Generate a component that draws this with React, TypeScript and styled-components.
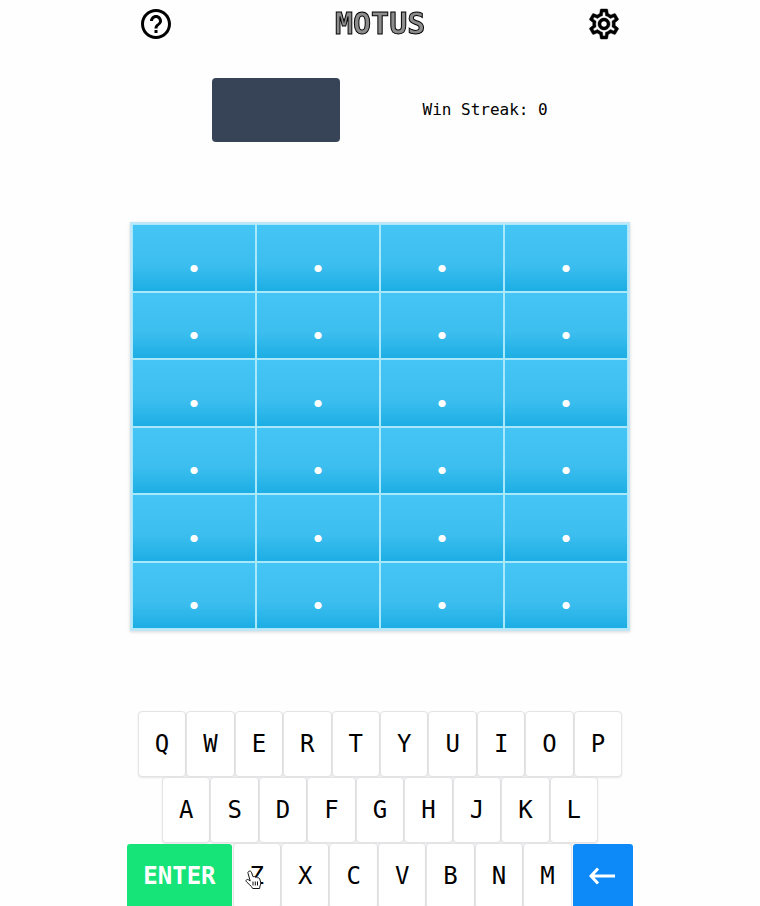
import React from "react";
import styled, { createGlobalStyle, css } from "styled-components";
import { MdHelpOutline, MdOutlineSettings } from "react-icons/md";

const GlobalStyle = createGlobalStyle`
  *, *::before, *::after { box-sizing: border-box; }
  body {
    margin: 0;
    background: #fefefe;
    color: #000;
    font-family: "DejaVu Sans Mono", "Liberation Mono", monospace;
    font-size: 16px;
    line-height: 24px;
  }
`;

const Page = styled.div`
  height: 100vh;
  overflow: hidden;
  display: flex;
  flex-direction: column;
  align-items: center;
`;

const Game = styled.main`
  width: 100%;
  max-width: 500px;
  display: flex;
  flex-direction: column;
`;

const Header = styled.header`
  display: flex;
  align-items: center;
  justify-content: space-between;
  padding: 6px 8px;
`;

const Title = styled.h1`
  margin: 0;
  font-size: 30px;
  line-height: 36px;
  font-weight: 700;
  color: #8c8c8c;
  -webkit-text-stroke: 1px #000;
  will-change: transform;
`;

const IconButton = styled.button`
  display: flex;
  padding: 0;
  border: 0;
  background: none;
  color: #000;
  font-size: 36px;
  cursor: pointer;
`;

const SettingsIcon = styled(MdOutlineSettings)`
  path:last-child {
    stroke: currentColor;
    stroke-width: 0.3;
  }
`;

const Stats = styled.section`
  display: flex;
  align-items: center;
  justify-content: space-evenly;
  margin-top: 30px;
`;

const Timer = styled.div`
  width: 128px;
  height: 64px;
  border-radius: 4px;
  background: #374357;
`;

const Streak = styled.p`
  margin: 0;
`;

const Board = styled.section`
  display: grid;
  grid-template-columns: repeat(4, 1fr);
  grid-template-rows: repeat(6, 1fr);
  height: 409px;
  margin-top: 80px;
  border: 2px solid #bee6f9;
  box-shadow: 0 1px 3px rgba(0, 0, 0, 0.16);
`;

const Cell = styled.div`
  display: flex;
  align-items: center;
  justify-content: center;
  min-height: 0;
  padding-bottom: 6px;
  border: 1px solid #a9e8fb;
  background: linear-gradient(#45c5f6, #3cbeef 60%, #1daee4);
  color: #fff;
  font-family: Lato, "Noto Sans", sans-serif;
  font-size: 44px;
  line-height: 48px;
  font-weight: 900;
`;

const Keyboard = styled.section`
  display: flex;
  flex-direction: column;
  align-items: center;
  margin-top: 80px;
`;

const KeyRow = styled.div`
  display: flex;
  justify-content: center;
`;

type Tone = "plain" | "enter" | "erase";

const tones = {
  plain: css`
    background: #fff;
    color: #000;
    font-weight: 400;
    border-color: #e4e4e7;
    box-shadow: 0 1px 2px rgba(0, 0, 0, 0.1);
  `,
  enter: css`
    background: #17e478 padding-box;
    color: #fff;
    font-weight: 700;
    border-color: transparent;
  `,
  erase: css`
    background: #0d8af8 padding-box;
    color: #fff;
    border-color: transparent;
  `,
};

const Key = styled.button<{ $tone: Tone }>`
  position: relative;
  display: flex;
  align-items: center;
  justify-content: center;
  height: 66px;
  padding: 0 16px;
  border: 1px solid;
  border-radius: 4px;
  font-family: inherit;
  font-size: 24px;
  line-height: 32px;
  cursor: pointer;
  ${({ $tone }) => tones[$tone]}
`;

const Pointer = styled.svg`
  position: absolute;
  left: 11px;
  top: 26px;
  width: 18px;
  height: 20px;
`;

const HandPointer = () => (
  <Pointer viewBox="0 0 18 20" aria-hidden="true">
    <path
      d="M4.2 1.2c1-.4 1.8 0 2.2 1l1.7 4.6c.8-.5 1.8-.3 2.200.5.9-.5 1.800-.2 2.200.6 1-.4 2 .1 2.300 1.100l.8 3.200c.3 1.500-.1 2.700-.6 3.800l-.4 2.500H7.700l-1.300-2C5 15.300 3.300 13.500 1.600 11.900c-.8-.8-.7-1.700 0-2.200.7-.5 1.600-.2 2.300.3l1.300 1L3 3.200c-.3-.9.200-1.700 1.200-2z"
      fill="#fff"
      stroke="#111"
      strokeWidth="1"
      strokeLinejoin="round"
    />
    <path d="M8 11.500v4M10.300 11.500v4M12.500 11.500v4" stroke="#111" strokeWidth="1" />
  </Pointer>
);

const ArrowLeft = () => (
  <svg width="28" height="24" viewBox="0 0 28 24" fill="none" stroke="currentColor" strokeWidth="3" aria-hidden="true">
    <path d="M26 12H3M9 4.500L2 12l7 7.500" />
  </svg>
);

const rows = ["QWERTYUIOP", "ASDFGHJKL", "ZXCVBNM"];
const cells = Array.from({ length: 24 }, (_, i) => i);

export default function App() {
  const letters = (row: string) =>
    row.split("").map((letter) => (
      <Key key={letter} type="button" $tone="plain">
        {letter}
        {letter === "Z" && <HandPointer />}
      </Key>
    ));

  return (
    <Page>
      <GlobalStyle />
      <Game>
        <Header>
          <IconButton type="button" aria-label="Help">
            <MdHelpOutline />
          </IconButton>
          <Title>MOTUS</Title>
          <IconButton type="button" aria-label="Settings">
            <SettingsIcon />
          </IconButton>
        </Header>
        <Stats>
          <Timer />
          <Streak>Win Streak: 0</Streak>
        </Stats>
        <Board aria-label="Guesses">
          {cells.map((i) => (
            <Cell key={i}>.</Cell>
          ))}
        </Board>
        <Keyboard aria-label="Keyboard">
          <KeyRow>{letters(rows[0])}</KeyRow>
          <KeyRow>{letters(rows[1])}</KeyRow>
          <KeyRow>
            <Key type="button" $tone="enter">
              ENTER
            </Key>
            {letters(rows[2])}
            <Key type="button" $tone="erase" aria-label="Erase">
              <ArrowLeft />
            </Key>
          </KeyRow>
        </Keyboard>
      </Game>
    </Page>
  );
}
